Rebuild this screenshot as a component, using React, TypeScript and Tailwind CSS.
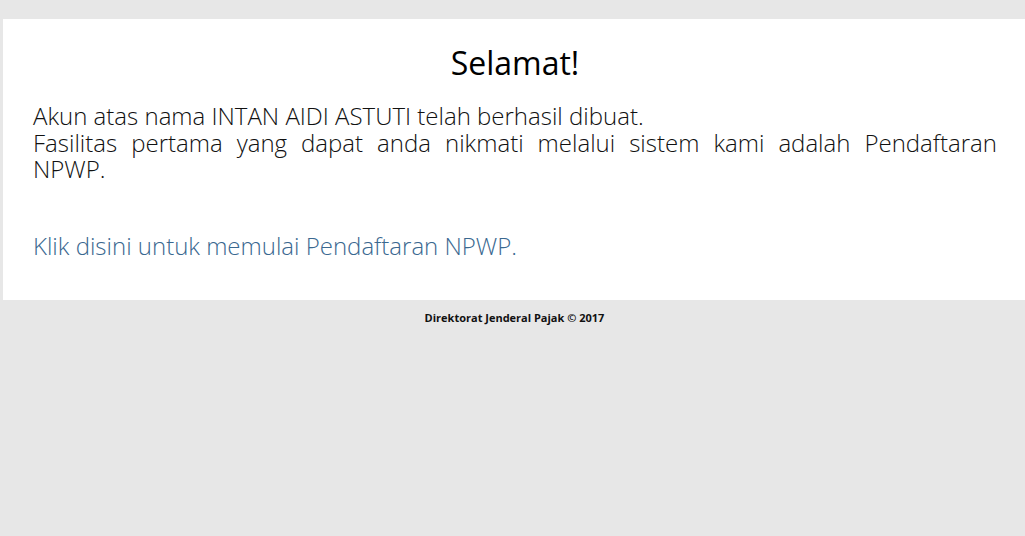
export default function App() {
  return (
    <div
      className="min-h-[536px] bg-[#e7e7e7] pt-[19px]"
      style={{ fontFamily: '"Open Sans", sans-serif' }}
    >
      <div className="ml-[3px] bg-white pl-[30px] pr-[28px] pt-[22px] pb-[41px]">
        <h1 className="text-center text-[32px] leading-[44px] text-black">Selamat!</h1>
        <div className="mt-[18px] text-justify text-[24px] font-light leading-[26.5px] text-[#111]">
          <p>Akun atas nama INTAN AIDI ASTUTI telah berhasil dibuat.</p>
          <p>
            Fasilitas pertama yang dapat anda nikmati melalui sistem kami adalah Pendaftaran NPWP.
          </p>
          <p className="mt-[50px]">
            <a href="#" className="text-[#3a6890]">
              Klik disini untuk memulai Pendaftaran NPWP.
            </a>
          </p>
        </div>
      </div>
      <footer className="pt-[10px] pl-[4px] text-center text-[11px] font-bold text-[#111]">
        Direktorat Jenderal Pajak © 2017
      </footer>
    </div>
  );
}
